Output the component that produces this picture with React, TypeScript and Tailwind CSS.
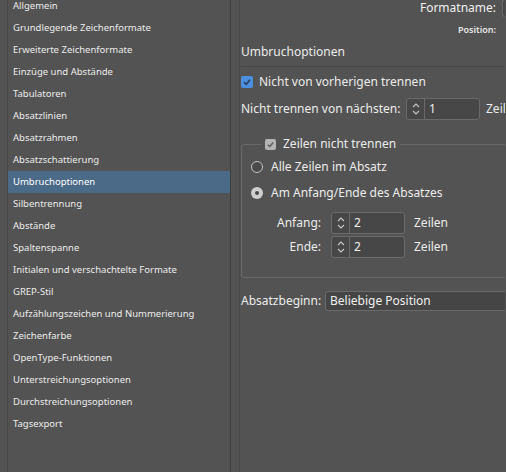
import React from 'react';

const ITEMS = [
  'Allgemein',
  'Grundlegende Zeichenformate',
  'Erweiterte Zeichenformate',
  'Einzüge und Abstände',
  'Tabulatoren',
  'Absatzlinien',
  'Absatzrahmen',
  'Absatzschattierung',
  'Umbruchoptionen',
  'Silbentrennung',
  'Abstände',
  'Spaltenspanne',
  'Initialen und verschachtelte Formate',
  'GREP-Stil',
  'Aufzählungszeichen und Nummerierung',
  'Zeichenfarbe',
  'OpenType-Funktionen',
  'Unterstreichungsoptionen',
  'Durchstreichungsoptionen',
  'Tagsexport',
];

function Spinner({ value }: { value: string }) {
  return (
    <div className="flex h-[22px] w-[74px] shrink-0 rounded-[3px] border border-[#6a6a6a] bg-[#474747]">
      <div className="flex w-[18px] flex-col items-center justify-center border-r border-[#6a6a6a]">
        <svg width="10" height="16" viewBox="0 0 10 16" fill="none" stroke="#c8c8c8" strokeWidth="1.1">
          <path d="M2 6 L5 3 L8 6" />
          <path d="M2 10 L5 13 L8 10" />
        </svg>
      </div>
      <div className="flex items-center pl-[4px] text-[12px] text-[#f0f0f0]">{value}</div>
    </div>
  );
}

export default function App() {
  return (
    <div
      className="flex h-[472px] w-[506px] overflow-hidden bg-[#535353] text-[#ececec]"
      style={{ fontFamily: '"Noto Sans", "Open Sans", sans-serif' }}
    >
      {/* left gutter */}
      <div className="w-[8px] shrink-0 border-r border-[#474747]" />

      {/* category list */}
      <div className="w-[223px] shrink-0 border-r border-[#3f3f3f]">
        <ul className="mt-[-5px] flex flex-col">
          {ITEMS.map((it) => (
            <li
              key={it}
              className={`flex h-[22px] items-center pl-[5px] text-[9.5px] ${
                it === 'Umbruchoptionen' ? 'bg-[#4b6a88] text-white' : 'text-[#ececec]'
              }`}
            >
              {it}
            </li>
          ))}
        </ul>
      </div>

      <div className="w-[9px] shrink-0 border-r border-[#4a4a4a]" />

      {/* options */}
      <div className="w-[265px] shrink-0 overflow-hidden pl-[1px]">
        <div className="mt-[-1px] flex h-[18px] items-center justify-end gap-[6px]">
          <span className="text-[12px] text-[#f0f0f0]">Formatname:</span>
          <div className="h-[18px] w-[3px] rounded-l-[3px] border-y border-l border-[#6a6a6a] bg-[#474747]" />
        </div>
        <div className="mt-[6px] flex h-[14px] items-center justify-end pr-[9px]">
          <span className="text-[9px] font-semibold text-[#e6e6e6]">Position:</span>
        </div>

        <div className="mt-[6px] flex h-[18px] items-center text-[12px]">Umbruchoptionen</div>
        <div className="mt-[5px] w-[300px] border-t border-[#474747]" />

        <div className="mt-[5px] flex h-[20px] items-center gap-[6px]">
          <div className="flex h-[12px] w-[12px] items-center justify-center rounded-[2px] bg-[#4a8fe0]">
            <svg width="10" height="10" viewBox="0 0 10 10" fill="none" stroke="#263f5c" strokeWidth="1.6">
              <path d="M2 5.2 L4.2 7.3 L8 2.8" />
            </svg>
          </div>
          <span className="text-[12px]">Nicht von vorherigen trennen</span>
        </div>

        <div className="mt-[6px] flex h-[22px] items-center">
          <span className="w-[165px] shrink-0 whitespace-nowrap text-[12px]">Nicht trennen von nächsten:</span>
          <Spinner value="1" />
          <span className="ml-[6px] text-[12px]">Zeilen</span>
        </div>

        <fieldset className="mt-[16px] w-[320px] rounded-[3px] border border-[#696969] pb-[19px] pl-[9px]">
          <legend className="ml-[10px] flex h-[16px] items-center gap-[7px] px-[4px]">
            <div className="flex h-[11px] w-[11px] items-center justify-center rounded-[2px] bg-[#b4b4b4]">
              <svg width="9" height="9" viewBox="0 0 10 10" fill="none" stroke="#5e5e5e" strokeWidth="1.6">
                <path d="M2 5.2 L4.2 7.3 L8 2.8" />
              </svg>
            </div>
            <span className="text-[12px]">Zeilen nicht trennen</span>
          </legend>

          <div className="mt-[6px] flex h-[18px] items-center gap-[8px]">
            <div className="h-[12px] w-[12px] rounded-full border border-[#c4c4c4] bg-[#4a4a4a]" />
            <span className="text-[12px]">Alle Zeilen im Absatz</span>
          </div>
          <div className="mt-[8px] flex h-[18px] items-center gap-[8px]">
            <div className="flex h-[12px] w-[12px] items-center justify-center rounded-full bg-[#cfcfcf]">
              <div className="h-[4px] w-[4px] rounded-full bg-[#4a4a4a]" />
            </div>
            <span className="text-[12px]">Am Anfang/Ende des Absatzes</span>
          </div>

          <div className="mt-[10px] flex h-[22px] items-center">
            <span className="w-[71px] shrink-0 pr-[1px] text-right text-[12px]">Anfang:</span>
            <div className="ml-[9px]">
              <Spinner value="2" />
            </div>
            <span className="ml-[9px] text-[12px]">Zeilen</span>
          </div>
          <div className="mt-[2px] flex h-[22px] items-center">
            <span className="w-[71px] shrink-0 pr-[1px] text-right text-[12px]">Ende:</span>
            <div className="ml-[9px]">
              <Spinner value="2" />
            </div>
            <span className="ml-[9px] text-[12px]">Zeilen</span>
          </div>
        </fieldset>

        <div className="mt-[13px] flex h-[20px] items-center">
          <span className="w-[84px] shrink-0 text-[12px]">Absatzbeginn:</span>
          <div className="flex h-[20px] w-[260px] shrink-0 items-center rounded-[3px] border border-[#6a6a6a] bg-[#454545] pl-[4px] text-[12px] text-[#f0f0f0]">
            Beliebige Position
          </div>
        </div>
      </div>
    </div>
  );
}
